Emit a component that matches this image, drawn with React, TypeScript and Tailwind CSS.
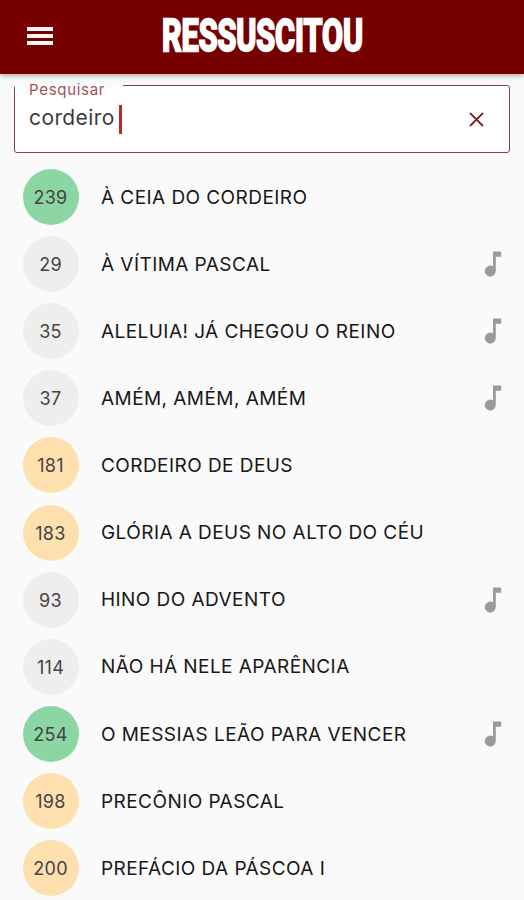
type Song = { number: number; title: string; tone: string; audio?: boolean };

const green = 'bg-[#8bd6a3]';
const gray = 'bg-[#eeeeee]';
const amber = 'bg-[#fee0ae]';

const songs: Song[] = [
  { number: 239, title: 'À CEIA DO CORDEIRO', tone: green },
  { number: 29, title: 'À VÍTIMA PASCAL', tone: gray, audio: true },
  { number: 35, title: 'ALELUIA! JÁ CHEGOU O REINO', tone: gray, audio: true },
  { number: 37, title: 'AMÉM, AMÉM, AMÉM', tone: gray, audio: true },
  { number: 181, title: 'CORDEIRO DE DEUS', tone: amber },
  { number: 183, title: 'GLÓRIA A DEUS NO ALTO DO CÉU', tone: amber },
  { number: 93, title: 'HINO DO ADVENTO', tone: gray, audio: true },
  { number: 114, title: 'NÃO HÁ NELE APARÊNCIA', tone: gray },
  { number: 254, title: 'O MESSIAS LEÃO PARA VENCER', tone: green, audio: true },
  { number: 198, title: 'PRECÔNIO PASCAL', tone: amber },
  { number: 200, title: 'PREFÁCIO DA PÁSCOA I', tone: amber },
];

function Note() {
  return (
    <svg className="h-[26px] w-[18px] shrink-0" viewBox="0 0 18 26" fill="#9b9b9b" aria-hidden="true">
      <path d="M9 0.5H17.2v5.3h-5.4v14.3A5.5 5.5 0 1 1 9 15.3Z" />
    </svg>
  );
}

export default function App() {
  return (
    <div className="flex h-[900px] w-[524px] flex-col overflow-hidden bg-[#fafafa] font-['Inter',sans-serif]">
      <header className="z-10 flex h-[74px] shrink-0 items-center bg-[#750000] pl-[27px] shadow-[0_1px_6px_rgba(0,0,0,0.4)]">
        <button aria-label="Menu" className="flex w-[26px] flex-col gap-[3px] pb-[3px]">
          <span className="h-1 bg-[#fff5f5]" />
          <span className="h-1 bg-[#fff5f5]" />
          <span className="h-1 bg-[#fff5f5]" />
        </button>
        <svg className="ml-[102px] h-[64px] w-[216px] overflow-visible" viewBox="0 0 216 64" role="img" aria-label="RESSUSCITOU">
          <text
            x="7"
            y="46"
            textLength="201"
            lengthAdjust="spacingAndGlyphs"
            fill="#ffffff"
            stroke="#ffffff"
            strokeWidth="2.4"
            className="font-['Roboto',sans-serif] text-[44px] font-bold"
          >
            RESSUSCITOU
          </text>
        </svg>
      </header>

      <div className="h-[89.5px] shrink-0 px-[14px] pt-[11px]">
        <fieldset className="relative h-[68px] rounded-[3px] border border-[#884044] bg-white">
          <div className="absolute -top-[2px] left-0 h-[5px] w-[108px] bg-[#fcfcfc]" />
          <label className="absolute -top-[6px] left-[14px] text-[15px] leading-5 tracking-[0.7px] text-[#a45158]">Pesquisar</label>
          <div className="flex h-full items-center pr-[25px] pl-[14px]">
            <span className="pb-[2px] text-[21px] tracking-[0.4px] text-[#3c3c3c]">cordeiro</span>
            <span className="ml-[4px] h-[29px] w-[3px] bg-[#c71f2c]" />
            <svg className="ml-auto h-[15px] w-[15px]" viewBox="0 0 15 15" fill="none" stroke="#7d2528" strokeWidth="1.8" aria-hidden="true">
              <path d="M1 1 14 14M14 1 1 14" />
            </svg>
          </div>
        </fieldset>
      </div>

      <ul className="flex flex-col">
        {songs.map((song) => (
          <li key={song.number} className="flex h-[67.1px] shrink-0 items-center pr-[22px] pl-[23px]">
            <span className={`flex h-14 w-14 shrink-0 items-center justify-center rounded-full pr-px pt-px text-[18px] tracking-[0.3px] text-[#444444] ${song.tone}`}>
              {song.number}
            </span>
            <span className="ml-[22px] flex-1 pt-[2px] text-[19px] tracking-[0.44px] whitespace-nowrap text-[#171717]">{song.title}</span>
            {song.audio && <Note />}
          </li>
        ))}
      </ul>
    </div>
  );
}
